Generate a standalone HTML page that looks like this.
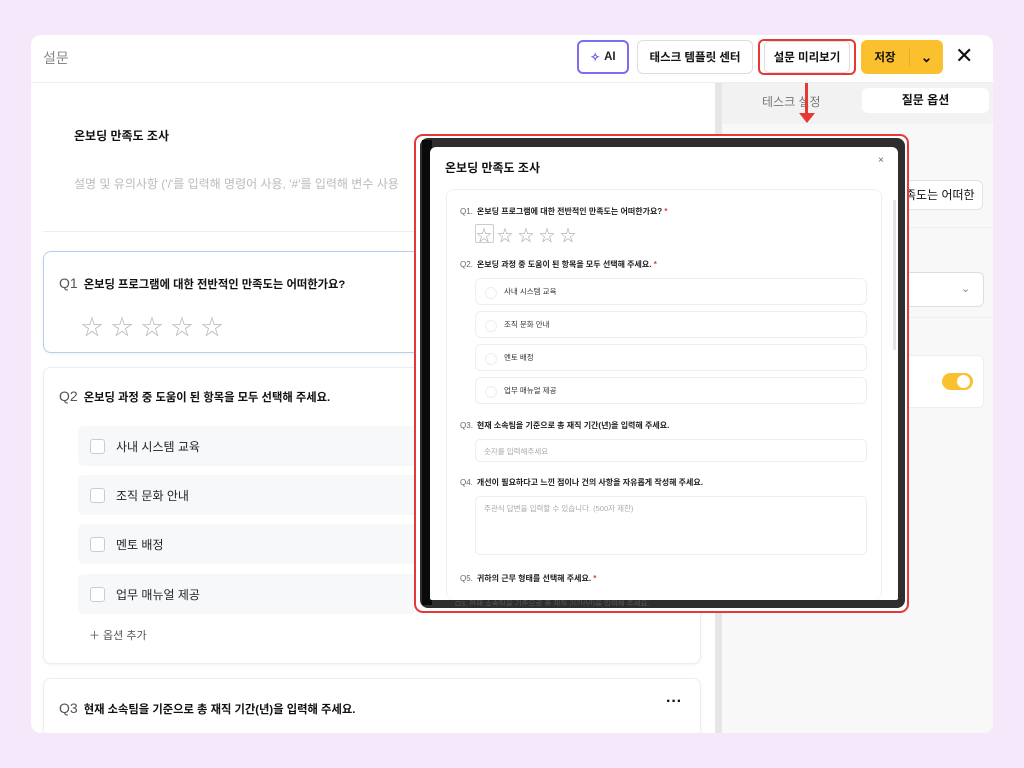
<!DOCTYPE html>
<html><head><meta charset="utf-8"><style>
*{box-sizing:border-box;margin:0;padding:0;white-space:nowrap}
body{width:1024px;height:768px;background:#f6e8fb;font-family:"Liberation Sans","Noto Sans CJK KR",sans-serif;color:#111;position:relative;overflow:hidden}
.a{position:absolute}
.card{left:31px;top:35px;width:962px;height:698px;background:#fff;border-radius:10px;overflow:hidden}
.btn{position:absolute;top:40px;height:34px;border:1px solid #ddd;border-radius:6px;background:#fff;font-size:11.5px;font-weight:bold;display:flex;align-items:center;justify-content:center}
.qcard{position:absolute;left:43px;width:658px;border:1px solid #eee;border-radius:8px;background:#fff;box-shadow:0 1px 3px rgba(0,0,0,.06)}
.qn{color:#555;font-size:14px;margin-right:6px}
.qt{font-size:11.3px;font-weight:bold}
.opt{position:absolute;left:78px;width:340px;height:40px;background:#f7f8f9;border-radius:6px;font-size:12px;color:#222;display:flex;align-items:center;padding-left:38px}
.opt:before{content:"";position:absolute;left:12px;top:13px;width:13px;height:13px;border:1px solid #ccc;border-radius:3px;background:#fff}
.star{font-size:22px;color:#bbb;letter-spacing:8px}
.mq{position:absolute;left:460px;font-size:8px;font-weight:bold;color:#222}
.mq span{color:#666;font-weight:normal;margin-right:4px}
.mo{position:absolute;left:475px;width:392px;height:27px;border:1px solid #eee;border-radius:6px;font-size:7.5px;color:#333;display:flex;align-items:center;padding-left:28px}
.mo:before{content:"";position:absolute;left:9px;top:8px;width:10px;height:10px;border:1px solid #eee;border-radius:50%}
.red{color:#e53935}
</style></head><body>
<div class="a card"></div>
<div class="a" style="left:43px;top:48px;font-size:14px;color:#888">설문</div>
<div class="a" style="left:31px;top:82px;width:962px;height:1px;background:#eee"></div>
<div class="btn" style="left:577px;width:52px;border:2px solid #7b6cf0;color:#222"><span style="color:#6a5ae0;margin-right:4px">✧</span>AI</div>
<div class="btn" style="left:637px;width:116px">태스크 템플릿 센터</div>
<div class="btn" style="left:758px;width:98px;border:2px solid #e53935;top:39px;height:36px"><span style="border:1px solid #ddd;border-radius:5px;padding:7px 9px;background:#fff">설문 미리보기</span></div>
<div class="btn" style="left:861px;width:82px;background:#fbc02d;border:none"><span style="width:48px;text-align:center">저장</span><span style="width:34px;text-align:center;border-left:1px solid #e6ad20;font-size:14px">⌄</span></div>
<div class="a" style="left:955px;top:43px;font-size:22px;color:#111">✕</div>

<div class="a" style="left:74px;top:127px;font-size:12px;font-weight:bold">온보딩 만족도 조사</div>
<div class="a" style="left:74px;top:175px;font-size:12px;color:#bbb">설명 및 유의사항 ('/'를 입력해 명령어 사용, '#'를 입력해 변수 사용</div>
<div class="a" style="left:43px;top:231px;width:672px;height:1px;background:#eee"></div>
<div class="qcard" style="top:251px;height:102px;border-color:#b9cdef">
 <div class="a" style="left:15px;top:23px"><span class="qn">Q1</span><span class="qt">온보딩 프로그램에 대한 전반적인 만족도는 어떠한가요?</span></div>
 <div class="a star" style="left:37px;top:58px">☆☆☆☆☆</div>
</div>
<div class="qcard" style="top:367px;height:297px">
 <div class="a" style="left:15px;top:20px"><span class="qn">Q2</span><span class="qt">온보딩 과정 중 도움이 된 항목을 모두 선택해 주세요.</span></div>
</div>
<div class="opt" style="top:426px">사내 시스템 교육</div>
<div class="opt" style="top:475px">조직 문화 안내</div>
<div class="opt" style="top:524px">멘토 배정</div>
<div class="opt" style="top:574px">업무 매뉴얼 제공</div>
<div class="a" style="left:89px;top:627px;font-size:11px;color:#555">＋ 옵션 추가</div>
<div class="qcard" style="top:678px;height:70px">
 <div class="a" style="left:15px;top:21px"><span class="qn">Q3</span><span class="qt">현재 소속팀을 기준으로 총 재직 기간(년)을 입력해 주세요.</span></div>
 <div class="a" style="left:622px;top:14px;font-weight:bold">···</div>
</div>
<div class="a" style="left:31px;top:733px;width:962px;height:35px;background:#f6e8fb"></div>
<div class="a" style="left:715px;top:83px;width:7px;height:650px;background:#e6e6e6"></div>

<div class="a" style="left:722px;top:83px;width:271px;height:650px;background:#f8f8f9;border-radius:0 0 10px 0"></div>
<div class="a" style="left:722px;top:83px;width:271px;height:41px;background:#f2f2f3"></div>
<div class="a" style="left:762px;top:93px;font-size:12px;color:#777">테스크 설정</div>
<div class="a" style="left:862px;top:88px;width:127px;height:25px;background:#fff;border-radius:6px;font-size:12px;font-weight:bold;text-align:center;line-height:25px">질문 옵션</div>
<div class="a" style="left:880px;top:180px;width:103px;height:30px;background:#fff;border:1px solid #e3e3e3;border-radius:6px;font-size:12px;line-height:28px;padding-left:24px;overflow:hidden">족도는 어떠한</div>
<div class="a" style="left:722px;top:227px;width:271px;height:1px;background:#eee"></div>
<div class="a" style="left:880px;top:272px;width:104px;height:35px;background:#fff;border:1px solid #ddd;border-radius:6px;font-size:11px;color:#888;line-height:33px;padding-left:80px">⌄</div>
<div class="a" style="left:722px;top:317px;width:271px;height:1px;background:#eee"></div>
<div class="a" style="left:880px;top:355px;width:104px;height:53px;background:#fff;border:1px solid #eee;border-radius:6px"></div>
<div class="a" style="left:942px;top:373px;width:31px;height:17px;background:#fbc02d;border-radius:9px"><div class="a" style="left:15px;top:2px;width:13px;height:13px;background:#fff;border-radius:50%"></div></div>

<div class="a" style="left:805px;top:83px;width:3px;height:32px;background:#e53935"></div>
<div class="a" style="left:799px;top:113px;width:0;height:0;border-left:8px solid transparent;border-right:8px solid transparent;border-top:10px solid #e53935"></div>

<div class="a" style="left:414px;top:134px;width:495px;height:479px;border:2px solid #e53935;border-radius:9px;background:#fff"></div>
<div class="a" style="left:420px;top:138px;width:485px;height:470px;background:#2e2e2e;border-radius:8px"></div>
<div class="a" style="left:422px;top:140px;width:10px;height:465px;background:#0a0a0a"></div>
<div class="a" style="left:430px;top:147px;width:468px;height:453px;background:#fff;border-radius:6px 6px 2px 2px"></div>
<div class="a" style="left:445px;top:159px;font-size:12px;font-weight:bold">온보딩 만족도 조사</div>
<div class="a" style="left:878px;top:155px;font-size:10px;color:#666">×</div>
<div class="a" style="left:446px;top:189px;width:436px;height:411px;border:1px solid #eee;border-radius:8px;border-bottom:none"></div>
<div class="a" style="left:893px;top:200px;width:3px;height:150px;background:#e4e4e4"></div>
<div class="mq" style="top:206px"><span>Q1.</span>온보딩 프로그램에 대한 전반적인 만족도는 어떠한가요? <b class="red">*</b></div>
<div class="a" style="left:475px;top:224px;width:19px;height:19px;border:1px solid #ccc;border-radius:2px"></div>
<div class="a" style="left:476px;top:222px;font-size:16px;color:#aaa;letter-spacing:5px">☆☆☆☆☆</div>
<div class="mq" style="top:259px"><span>Q2.</span>온보딩 과정 중 도움이 된 항목을 모두 선택해 주세요. <b class="red">*</b></div>
<div class="mo" style="top:278px">사내 시스템 교육</div>
<div class="mo" style="top:311px">조직 문화 안내</div>
<div class="mo" style="top:344px">멘토 배정</div>
<div class="mo" style="top:377px">업무 매뉴얼 제공</div>
<div class="mq" style="top:420px"><span>Q3.</span>현재 소속팀을 기준으로 총 재직 기간(년)을 입력해 주세요.</div>
<div class="a" style="left:475px;top:439px;width:392px;height:23px;border:1px solid #eee;border-radius:5px;font-size:7.5px;color:#aaa;padding:6px 0 0 8px">숫자를 입력해주세요</div>
<div class="mq" style="top:477px"><span>Q4.</span>개선이 필요하다고 느낀 점이나 건의 사항을 자유롭게 작성해 주세요.</div>
<div class="a" style="left:475px;top:496px;width:392px;height:59px;border:1px solid #eee;border-radius:5px;font-size:7.5px;color:#aaa;padding:6px 0 0 8px">주관식 답변을 입력할 수 있습니다. (500자 제한)</div>
<div class="mq" style="top:573px"><span>Q5.</span>귀하의 근무 형태를 선택해 주세요. <b class="red">*</b></div>
<div class="a" style="left:455px;top:600px;font-size:7.5px;color:#555;line-height:8px;height:6px;overflow:hidden">Q3. 현재 소속팀을 기준으로 총 재직 기간(년)을 입력해 주세요.</div>
</body></html>
